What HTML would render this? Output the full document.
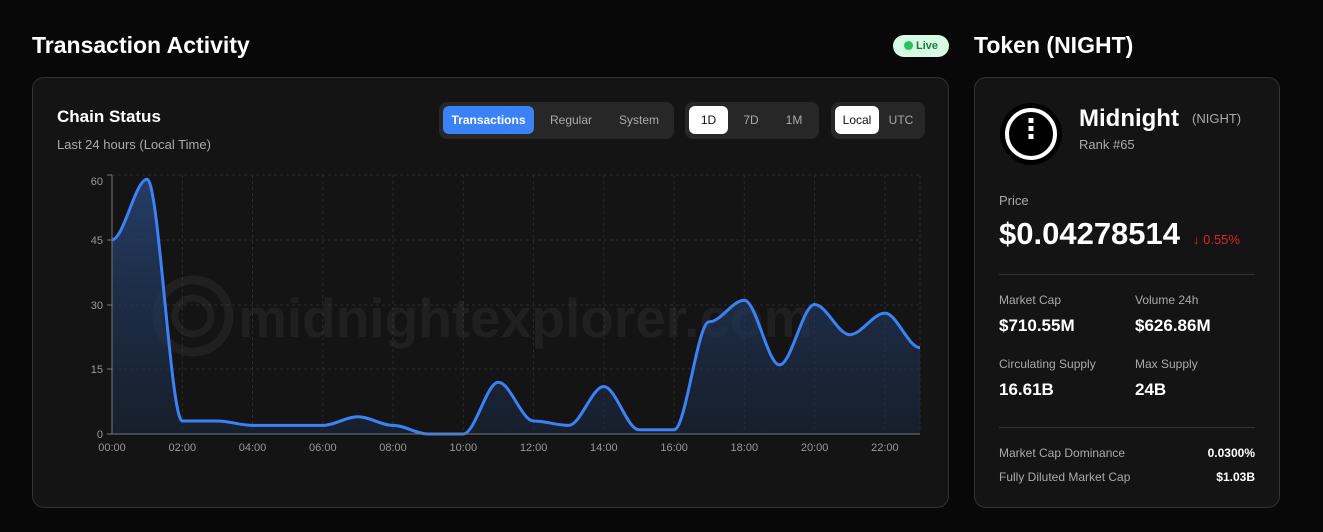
<!DOCTYPE html><html><head><style>
*{margin:0;padding:0;box-sizing:border-box}
body{width:1323px;height:532px;background:#080808;font-family:"Liberation Sans",sans-serif;color:#fff;position:relative;overflow:hidden}
.a{position:absolute}
.card{position:absolute;background:#141414;border:1px solid #333;border-radius:12px}
.seg{position:absolute;background:#272727;border-radius:8px;height:37px;top:102px}
.btn{position:absolute;top:4px;height:28px;border-radius:6px;font-size:12px;line-height:28px;text-align:center;color:#aaa}
.lbl{color:#aaa;font-size:12px}
.val{font-size:17px;font-weight:bold}
</style></head><body>
<div class="a" style="left:32px;top:32px;font-size:23px;font-weight:bold">Transaction Activity</div>
<div class="a" style="left:893px;top:35px;width:56px;height:22px;background:#d8fbe4;border-radius:11px;color:#15803d;font-size:11px;font-weight:bold;line-height:22px;padding-left:23px">Live</div>
<div class="a" style="left:904px;top:41px;width:9px;height:9px;border-radius:50%;background:#22c55e"></div>
<div class="a" style="left:974px;top:32px;font-size:23px;font-weight:bold">Token (NIGHT)</div>

<div class="card" style="left:32px;top:77px;width:917px;height:431px"></div>
<div class="a" style="left:57px;top:107px;font-size:17px;font-weight:bold">Chain Status</div>
<div class="a lbl" style="left:57px;top:137px;font-size:13px">Last 24 hours (Local Time)</div>
<div class="seg" style="left:439px;width:235px">
<div class="btn" style="left:4px;width:91px;background:#3b82f6;color:#fff;font-weight:bold">Transactions</div>
<div class="btn" style="left:98px;width:68px">Regular</div>
<div class="btn" style="left:168px;width:64px">System</div></div>
<div class="seg" style="left:685px;width:134px">
<div class="btn" style="left:4px;width:39px;background:#fff;color:#111">1D</div>
<div class="btn" style="left:47px;width:38px">7D</div>
<div class="btn" style="left:90px;width:38px">1M</div></div>
<div class="seg" style="left:831px;width:94px">
<div class="btn" style="left:4px;width:44px;background:#fff;color:#111">Local</div>
<div class="btn" style="left:50px;width:40px">UTC</div></div>

<svg class="a" style="left:0;top:0" width="949" height="508">
<defs><linearGradient id="g" x1="0" y1="0" x2="0" y2="1"><stop offset="0" stop-color="#2a4a80" stop-opacity=".75"/><stop offset="1" stop-color="#1a2a44" stop-opacity=".5"/></linearGradient></defs>
<g stroke="#2c2c2c" stroke-dasharray="3 3">
<line x1="112" y1="175" x2="920" y2="175"/><line x1="112" y1="240" x2="920" y2="240"/><line x1="112" y1="305" x2="920" y2="305"/><line x1="112" y1="369" x2="920" y2="369"/>
<line x1="182.3" y1="175" x2="182.3" y2="434"/><line x1="252.5" y1="175" x2="252.5" y2="434"/><line x1="322.8" y1="175" x2="322.8" y2="434"/><line x1="393" y1="175" x2="393" y2="434"/><line x1="463.3" y1="175" x2="463.3" y2="434"/><line x1="533.6" y1="175" x2="533.6" y2="434"/><line x1="603.8" y1="175" x2="603.8" y2="434"/><line x1="674.1" y1="175" x2="674.1" y2="434"/><line x1="744.3" y1="175" x2="744.3" y2="434"/><line x1="814.6" y1="175" x2="814.6" y2="434"/><line x1="884.9" y1="175" x2="884.9" y2="434"/><line x1="920" y1="175" x2="920" y2="434"/>
</g>
<g opacity=".07"><circle cx="193" cy="316" r="36" fill="none" stroke="#bbb" stroke-width="9"/><circle cx="193" cy="316" r="18" fill="none" stroke="#bbb" stroke-width="7"/>
<text x="238" y="337" font-size="55" font-weight="bold" fill="#bbb" font-family="Liberation Sans">midnightexplorer.com</text></g>
<path d="M112,239.7 C123.7,239.7 135.4,179.3 147.1,179.3 C158.8,179.3 170.6,421 182.3,421 C194,421 205.7,421 217.4,421 C229.1,421 240.8,425.4 252.5,425.4 C264.2,425.4 275.9,425.4 287.6,425.4 C299.3,425.4 311.1,425.4 322.8,425.4 C334.5,425.4 346.2,416.7 357.9,416.7 C369.6,416.7 381.3,425.4 393,425.4 C404.7,425.4 416.5,434 428.2,434 C439.9,434 451.6,434 463.3,434 C475,434 486.7,382.2 498.4,382.2 C510.1,382.2 521.9,421 533.6,421 C545.3,421 557,425.4 568.7,425.4 C580.4,425.4 592.1,386.5 603.8,386.5 C615.5,386.5 627.2,429.7 638.9,429.7 C650.6,429.7 662.4,429.7 674.1,429.7 C685.8,429.7 697.5,321.8 709.2,321.8 C720.9,321.8 732.6,300.2 744.3,300.2 C756,300.2 767.8,364.9 779.5,364.9 C791.2,364.9 802.9,304.5 814.6,304.5 C826.3,304.5 838,334.7 849.7,334.7 C861.4,334.7 873.2,313.1 884.9,313.1 C896.6,313.1 908.3,347.7 920,347.7 L920,434 L112,434 Z" fill="url(#g)"/>
<path d="M112,239.7 C123.7,239.7 135.4,179.3 147.1,179.3 C158.8,179.3 170.6,421 182.3,421 C194,421 205.7,421 217.4,421 C229.1,421 240.8,425.4 252.5,425.4 C264.2,425.4 275.9,425.4 287.6,425.4 C299.3,425.4 311.1,425.4 322.8,425.4 C334.5,425.4 346.2,416.7 357.9,416.7 C369.6,416.7 381.3,425.4 393,425.4 C404.7,425.4 416.5,434 428.2,434 C439.9,434 451.6,434 463.3,434 C475,434 486.7,382.2 498.4,382.2 C510.1,382.2 521.9,421 533.6,421 C545.3,421 557,425.4 568.7,425.4 C580.4,425.4 592.1,386.5 603.8,386.5 C615.5,386.5 627.2,429.7 638.9,429.7 C650.6,429.7 662.4,429.7 674.1,429.7 C685.8,429.7 697.5,321.8 709.2,321.8 C720.9,321.8 732.6,300.2 744.3,300.2 C756,300.2 767.8,364.9 779.5,364.9 C791.2,364.9 802.9,304.5 814.6,304.5 C826.3,304.5 838,334.7 849.7,334.7 C861.4,334.7 873.2,313.1 884.9,313.1 C896.6,313.1 908.3,347.7 920,347.7" fill="none" stroke="#3b82f6" stroke-width="3"/>
<g stroke="#777"><line x1="112" y1="175" x2="112" y2="434"/><line x1="112" y1="434" x2="920" y2="434"/><line x1="107" y1="175" x2="112" y2="175"/><line x1="107" y1="240" x2="112" y2="240"/><line x1="107" y1="305" x2="112" y2="305"/><line x1="107" y1="369" x2="112" y2="369"/><line x1="107" y1="434" x2="112" y2="434"/></g>
<g fill="#999" font-size="11" font-family="Liberation Sans" text-anchor="end">
<text x="103" y="185">60</text><text x="103" y="244">45</text><text x="103" y="309">30</text><text x="103" y="373">15</text><text x="103" y="438">0</text></g>
<g fill="#999" font-size="11" font-family="Liberation Sans" text-anchor="middle">
<text x="112" y="451">00:00</text><text x="182.3" y="451">02:00</text><text x="252.5" y="451">04:00</text><text x="322.8" y="451">06:00</text><text x="393" y="451">08:00</text><text x="463.3" y="451">10:00</text><text x="533.6" y="451">12:00</text><text x="603.8" y="451">14:00</text><text x="674.1" y="451">16:00</text><text x="744.3" y="451">18:00</text><text x="814.6" y="451">20:00</text><text x="884.9" y="451">22:00</text></g>
</svg>

<div class="card" style="left:974px;top:77px;width:306px;height:431px"></div>
<svg class="a" style="left:998px;top:102px" width="66" height="64"><circle cx="33" cy="32" r="31" fill="#000"/><circle cx="33" cy="32" r="24" fill="none" stroke="#fff" stroke-width="4"/><rect x="30.5" y="16" width="5" height="5" fill="#fff"/><rect x="30.5" y="24" width="5" height="5" fill="#fff"/><rect x="30.5" y="32" width="5" height="5" fill="#fff"/></svg>
<div class="a" style="left:1079px;top:105px;font-size:24px;font-weight:bold">Midnight</div>
<div class="a lbl" style="left:1192px;top:111px;font-size:13px">(NIGHT)</div>
<div class="a lbl" style="left:1079px;top:137px;font-size:13px">Rank #65</div>
<div class="a lbl" style="left:999px;top:193px;font-size:13px">Price</div>
<div class="a" style="left:999px;top:216px;font-size:31px;font-weight:bold">$0.04278514</div>
<div class="a" style="left:1193px;top:232px;font-size:13px;color:#dc2626">↓ 0.55%</div>
<div class="a" style="left:999px;top:274px;width:256px;height:1px;background:#333"></div>
<div class="a lbl" style="left:999px;top:293px">Market Cap</div>
<div class="a val" style="left:999px;top:316px">$710.55M</div>
<div class="a lbl" style="left:1135px;top:293px">Volume 24h</div>
<div class="a val" style="left:1135px;top:316px">$626.86M</div>
<div class="a lbl" style="left:999px;top:357px">Circulating Supply</div>
<div class="a val" style="left:999px;top:380px">16.61B</div>
<div class="a lbl" style="left:1135px;top:357px">Max Supply</div>
<div class="a val" style="left:1135px;top:380px">24B</div>
<div class="a" style="left:999px;top:427px;width:256px;height:1px;background:#333"></div>
<div class="a lbl" style="left:999px;top:446px">Market Cap Dominance</div>
<div class="a" style="right:68px;top:446px;font-size:12px;font-weight:bold">0.0300%</div>
<div class="a lbl" style="left:999px;top:470px">Fully Diluted Market Cap</div>
<div class="a" style="right:68px;top:470px;font-size:12px;font-weight:bold">$1.03B</div>
</body></html>
